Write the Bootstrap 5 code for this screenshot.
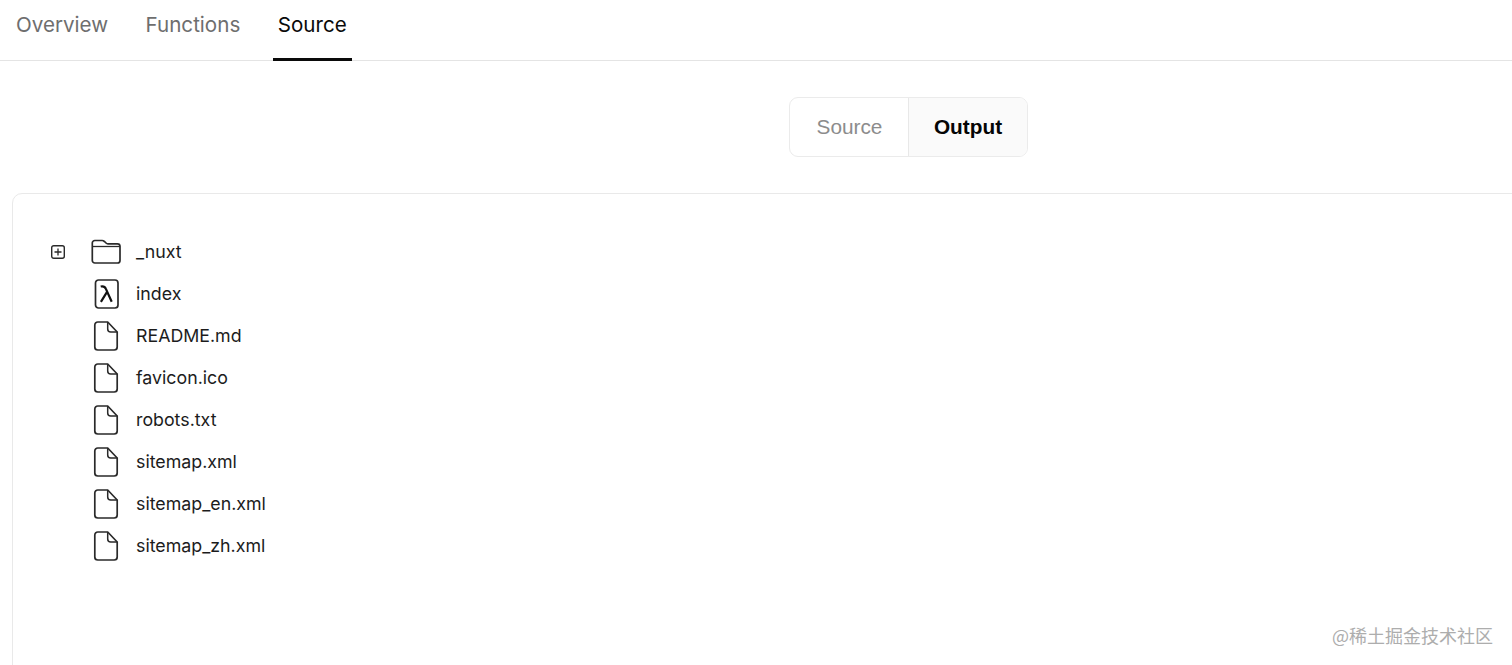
<!DOCTYPE html>
<html lang="en">
<head>
  <meta charset="UTF-8">
  <meta name="viewport" content="width=device-width, initial-scale=1.0">
  <title>Source</title>
  <link href="https://cdn.jsdelivr.net/npm/bootstrap@5.3.2/dist/css/bootstrap.min.css" rel="stylesheet">
  <style>
    html, body {
      height: 100%;
      overflow: hidden;
    }
    body {
      font-family: Inter, "Liberation Sans", sans-serif;
      color: #1a1a1a;
      background: #fff;
    }
    .tab-bar {
      height: 61px;
      padding-left: 11px;
      gap: 27.5px;
      border-bottom: 1px solid #e4e4e4;
    }
    .tab-bar .nav-link {
      height: 61px;
      padding: 10px 5px 0;
      font-size: 20.6px;
      line-height: 30px;
      color: #6e6e6e;
    }
    .tab-bar .nav-link.active {
      color: #0a0a0a;
      border-bottom: 3px solid #0a0a0a;
    }
    .toggle-row {
      padding: 36px 0 36px 789px;
    }
    .toggle-group {
      width: 239px;
      height: 60px;
      border: 1px solid #ebebeb;
      border-radius: 9px;
      overflow: hidden;
    }
    .toggle-group .btn {
      border: 0;
      border-radius: 0;
      padding: 0;
      font-size: 20.8px;
      font-family: "Liberation Sans", Arial, sans-serif;
    }
    .toggle-group .toggle-source {
      flex: 0 0 119px;
      color: #8c8c8c;
    }
    .toggle-group .toggle-output {
      flex: 1 1 0;
      color: #050505;
      font-weight: 700;
      background: #fafafa;
      border-left: 1px solid #e8e8e8;
    }
    .tree-card {
      width: 1600px;
      height: 560px;
      margin-left: 12px;
      padding: 37px 0 0 36px;
      border: 1px solid #e9e9e9;
      border-radius: 10px;
    }
    .tree-row {
      height: 42px;
      font-size: 17.8px;
      color: #1c1c1c;
    }
    .tree-toggle {
      width: 42px;
      flex: none;
      padding-left: 2px;
    }
    .tree-icon {
      width: 45px;
      flex: none;
    }
    .site-mark {
      position: absolute;
      right: 19px;
      bottom: 18px;
      font-family: "Noto Sans CJK SC", sans-serif;
      font-size: 18px;
      line-height: 24px;
      color: #adadad;
    }
  </style>
</head>
<body class="position-relative">
  <ul class="nav tab-bar">
    <li class="nav-item"><a class="nav-link" href="#">Overview</a></li>
    <li class="nav-item"><a class="nav-link" href="#">Functions</a></li>
    <li class="nav-item"><a class="nav-link active" href="#">Source</a></li>
  </ul>

  <div class="toggle-row">
    <div class="btn-group toggle-group d-flex">
      <button type="button" class="btn toggle-source">Source</button>
      <button type="button" class="btn toggle-output">Output</button>
    </div>
  </div>

  <svg width="0" height="0" class="position-absolute">
    <defs>
      <symbol id="file-ico" viewBox="0 0 45 30">
        <path d="M6.800 1h9.900L26.200 11v15a3 3 0 0 1-3 3H6.800a3 3 0 0 1-3-3V4a3 3 0 0 1 3-3z" fill="none" stroke="#2a2a2a" stroke-width="1.700"/>
        <path d="M16.700 1v7a3 3 0 0 0 3 3h6.500" fill="none" stroke="#2a2a2a" stroke-width="1.500"/>
      </symbol>
    </defs>
  </svg>

  <div class="card tree-card">
    <div class="tree-row d-flex align-items-center">
      <div class="tree-toggle">
        <svg class="d-block" width="14" height="14" viewBox="0 0 14 14">
          <rect x=".7" y=".7" width="12.600" height="12.600" rx="2" fill="none" stroke="#2a2a2a" stroke-width="1.400"/>
          <path d="M3.500 7h7M7 3.500v7" stroke="#2a2a2a" stroke-width="1.300"/>
        </svg>
      </div>
      <div class="tree-icon">
        <svg class="d-block" width="45" height="26" viewBox="0 0 45 26">
          <path d="M1.300 5.500V4A2.500 2.500 0 0 1 3.800 1.500h7.300c1 0 1.600.4 2.300 1l1.600 1.500c.5.500 1 .8 1.900.8h9.600A2.500 2.500 0 0 1 29 7.300v14.200a2.500 2.500 0 0 1-2.500 2.500H3.800a2.500 2.500 0 0 1-2.500-2.500z" fill="none" stroke="#2a2a2a" stroke-width="1.700"/>
          <path d="M1.300 7.500h27.700" fill="none" stroke="#2a2a2a" stroke-width="1.300"/>
        </svg>
      </div>
      <span>_nuxt</span>
    </div>
    <div class="tree-row d-flex align-items-center">
      <div class="tree-toggle"></div>
      <div class="tree-icon">
        <svg class="d-block" width="45" height="30" viewBox="0 0 45 30">
          <rect x="4.500" y="1" width="22.500" height="28" rx="3" fill="none" stroke="#2a2a2a" stroke-width="1.700"/>
          <path d="M9.700 7.500c2.500-.6 4.300.2 5.200 2.400L20.700 22.800M15.900 13.200 9.900 22.800" fill="none" stroke="#111" stroke-width="2.200"/>
        </svg>
      </div>
      <span>index</span>
    </div>
    <div class="tree-row d-flex align-items-center">
      <div class="tree-toggle"></div>
      <div class="tree-icon"><svg class="d-block" width="45" height="30"><use href="#file-ico"/></svg></div>
      <span>README.md</span>
    </div>
    <div class="tree-row d-flex align-items-center">
      <div class="tree-toggle"></div>
      <div class="tree-icon"><svg class="d-block" width="45" height="30"><use href="#file-ico"/></svg></div>
      <span>favicon.ico</span>
    </div>
    <div class="tree-row d-flex align-items-center">
      <div class="tree-toggle"></div>
      <div class="tree-icon"><svg class="d-block" width="45" height="30"><use href="#file-ico"/></svg></div>
      <span>robots.txt</span>
    </div>
    <div class="tree-row d-flex align-items-center">
      <div class="tree-toggle"></div>
      <div class="tree-icon"><svg class="d-block" width="45" height="30"><use href="#file-ico"/></svg></div>
      <span>sitemap.xml</span>
    </div>
    <div class="tree-row d-flex align-items-center">
      <div class="tree-toggle"></div>
      <div class="tree-icon"><svg class="d-block" width="45" height="30"><use href="#file-ico"/></svg></div>
      <span>sitemap_en.xml</span>
    </div>
    <div class="tree-row d-flex align-items-center">
      <div class="tree-toggle"></div>
      <div class="tree-icon"><svg class="d-block" width="45" height="30"><use href="#file-ico"/></svg></div>
      <span>sitemap_zh.xml</span>
    </div>
  </div>

  <div class="site-mark">@稀土掘金技术社区</div>
  <script src="https://cdn.jsdelivr.net/npm/bootstrap@5.3.2/dist/js/bootstrap.bundle.min.js"></script>
</body>
</html>
